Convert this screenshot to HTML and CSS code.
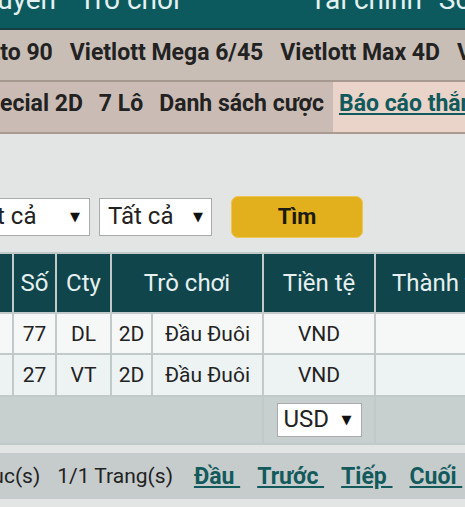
FILE: index.html
```html
<!DOCTYPE html>
<html lang="vi">
<head>
  <meta charset="UTF-8" />
  <meta name="viewport" content="width=device-width, initial-scale=1.0" />
  <title>Báo cáo thắng thua</title>
  <link rel="stylesheet" href="styles.css">
</head>
<body>
  <nav class="topnav">
    <div class="topnav-items">
      <a class="topnav-link">Trực tuyến</a>
      <a class="topnav-link">Trò chơi</a>
      <a class="topnav-link spaced">Tài chính</a>
      <a class="topnav-link">Sổ sách</a>
    </div>
  </nav>

  <nav class="games">
    <div class="games-items">
      <a class="games-link">Lotto 90</a>
      <a class="games-link">Vietlott Mega 6/45</a>
      <a class="games-link">Vietlott Max 4D</a>
      <a class="games-link">Vietlott Power 6/55</a>
    </div>
  </nav>

  <nav class="subnav">
    <div class="subnav-items">
      <a class="subnav-link">Special 2D</a>
      <a class="subnav-link">7 Lô</a>
      <a class="subnav-link">Danh sách cược</a>
      <a class="subnav-link active"><u>Báo cáo thắng thua</u></a>
    </div>
  </nav>

  <div class="filters">
    <div class="select select-first"><span>Tất cả</span><span class="caret">▼</span></div>
    <div class="select"><span>Tất cả</span><span class="caret">▼</span></div>
    <button class="btn-search">Tìm</button>
  </div>

  <table class="bets">
    <colgroup>
      <col class="c-id"><col class="c-num"><col class="c-cty"><col class="c-type"><col class="c-game"><col class="c-cur"><col class="c-total">
    </colgroup>
    <thead>
      <tr>
        <th>Mã</th>
        <th>Số</th>
        <th>Cty</th>
        <th colspan="2">Trò chơi</th>
        <th>Tiền tệ</th>
        <th>Thành tiền</th>
      </tr>
    </thead>
    <tbody>
      <tr class="row-odd">
        <td></td><td>77</td><td>DL</td><td>2D</td><td>Đầu Đuôi</td><td>VND</td><td></td>
      </tr>
      <tr class="row-even">
        <td></td><td>27</td><td>VT</td><td>2D</td><td>Đầu Đuôi</td><td>VND</td><td></td>
      </tr>
    </tbody>
    <tfoot>
      <tr>
        <td colspan="5"></td>
        <td><div class="select select-small"><span>USD</span><span class="caret">▼</span></div></td>
        <td></td>
      </tr>
    </tfoot>
  </table>

  <div class="pager">
    <div class="pager-items">
      <span>2 Mục(s)</span>
      <span>1/1 Trang(s)</span>
      <a class="pager-link first">Đầu&nbsp;</a>
      <a class="pager-link">Trước&nbsp;</a>
      <a class="pager-link">Tiếp&nbsp;</a>
      <a class="pager-link">Cuối&nbsp;</a>
    </div>
  </div>
</body>
</html>
```

FILE: styles.css
```css
body {
  margin: 0;
  font-family: Roboto, "Noto Sans", sans-serif;
  font-size: 20px;
  background-color: #e3e5e4;
  color: #222;
  overflow: hidden;
}
a {
  color: inherit;
  text-decoration: none;
}
.topnav {
  height: 28px;
  background-color: #0d5a5e;
  border-bottom: 2px solid #163f42;
  overflow: hidden;
}
.topnav-items {
  display: flex;
  white-space: nowrap;
  margin-top: -16px;
  margin-left: -76px;
  font-size: 28px;
  line-height: 32px;
}
.topnav-link {
  color: #e4f1f1;
  margin-right: 23px;
}
.topnav-link.spaced {
  margin-left: 107px;
  margin-right: 17px;
}
.games {
  height: 50px;
  background-color: #c9beb6;
  border-bottom: 2px solid #a69a90;
  overflow: hidden;
}
.games-items {
  display: flex;
  align-items: center;
  height: 100%;
  gap: 17px;
  white-space: nowrap;
  margin-left: -33px;
  font-size: 23px;
  font-weight: bold;
  padding-bottom: 6px;
  box-sizing: border-box;
}
.subnav {
  height: 50px;
  background-color: #cabcb4;
  border-bottom: 2px solid #a99b91;
  overflow: hidden;
}
.subnav-items {
  display: flex;
  align-items: stretch;
  height: 100%;
  white-space: nowrap;
  margin-left: -35px;
  font-size: 23px;
  font-weight: bold;
}
.subnav-link {
  display: flex;
  align-items: center;
  padding: 0 8px 8px;
}
.subnav-link.active {
  background-color: #ead3c9;
  color: #115a5c;
  margin-left: 1px;
  padding-left: 6px;
}
.filters {
  display: flex;
  align-items: center;
  padding-top: 62px;
  margin-left: -38px;
}
.select {
  display: flex;
  align-items: center;
  justify-content: space-between;
  box-sizing: border-box;
  width: 113px;
  height: 38px;
  padding: 0 8px 2px 8px;
  background-color: #fff;
  border: 1.5px solid #a9abab;
  margin-right: 9px;
  color: #222;
  font-size: 24px;
}
.select-first {
  width: 128px;
  padding-right: 9px;
}
.caret {
  font-family: "DejaVu Sans", sans-serif;
  font-size: 13px;
  color: #111;
}
.btn-search {
  margin-left: 10px;
  width: 132px;
  height: 42px;
  border: 1px solid #eec452;
  border-radius: 7px;
  background-color: #e2b01d;
  font-family: Roboto, sans-serif;
  font-size: 22px;
  font-weight: bold;
  color: #1b1a14;
  padding: 0 0 2px;
}
.bets {
  margin-top: 14px;
  margin-left: -50px;
  width: 560px;
  table-layout: fixed;
  border-collapse: separate;
  border-spacing: 2px;
  background-color: #c1c9c9;
}
.c-id { width: 60px; }
.c-num { width: 41px; }
.c-cty { width: 53px; }
.c-type { width: 39px; }
.c-game { width: 109px; }
.c-cur { width: 110px; }
.c-total { width: 132px; }
.bets th {
  height: 58px;
  padding: 0;
  background-color: #10454b;
  color: #e6f0f0;
  font-size: 24px;
  font-weight: normal;
  white-space: nowrap;
  overflow: hidden;
}
.bets th:last-child {
  text-align: left;
  padding-left: 16px;
}
.bets td {
  padding: 0;
  text-align: center;
  white-space: nowrap;
  overflow: hidden;
  font-size: 21px;
}
.row-odd td {
  height: 39px;
  background-color: #f6f8f8;
}
.row-even td {
  height: 40px;
  background-color: #edf2f2;
}
.bets tfoot td {
  height: 46px;
  background-color: #c8cfcf;
}
.select-small {
  width: 85px;
  height: 34px;
  margin: 0 auto;
  padding: 0 9px 2px 6px;
}
.pager {
  margin-top: 8px;
  height: 46px;
  background-color: #c6cccc;
  overflow: hidden;
}
.pager-items {
  display: flex;
  align-items: center;
  height: 100%;
  gap: 17px;
  white-space: nowrap;
  margin-left: -43px;
  font-size: 21px;
  box-sizing: border-box;
}
.pager-link {
  color: #135a5c;
  font-size: 23px;
  font-weight: bold;
  text-decoration: underline;
}
.pager-link.first {
  margin-left: 4px;
}
```
